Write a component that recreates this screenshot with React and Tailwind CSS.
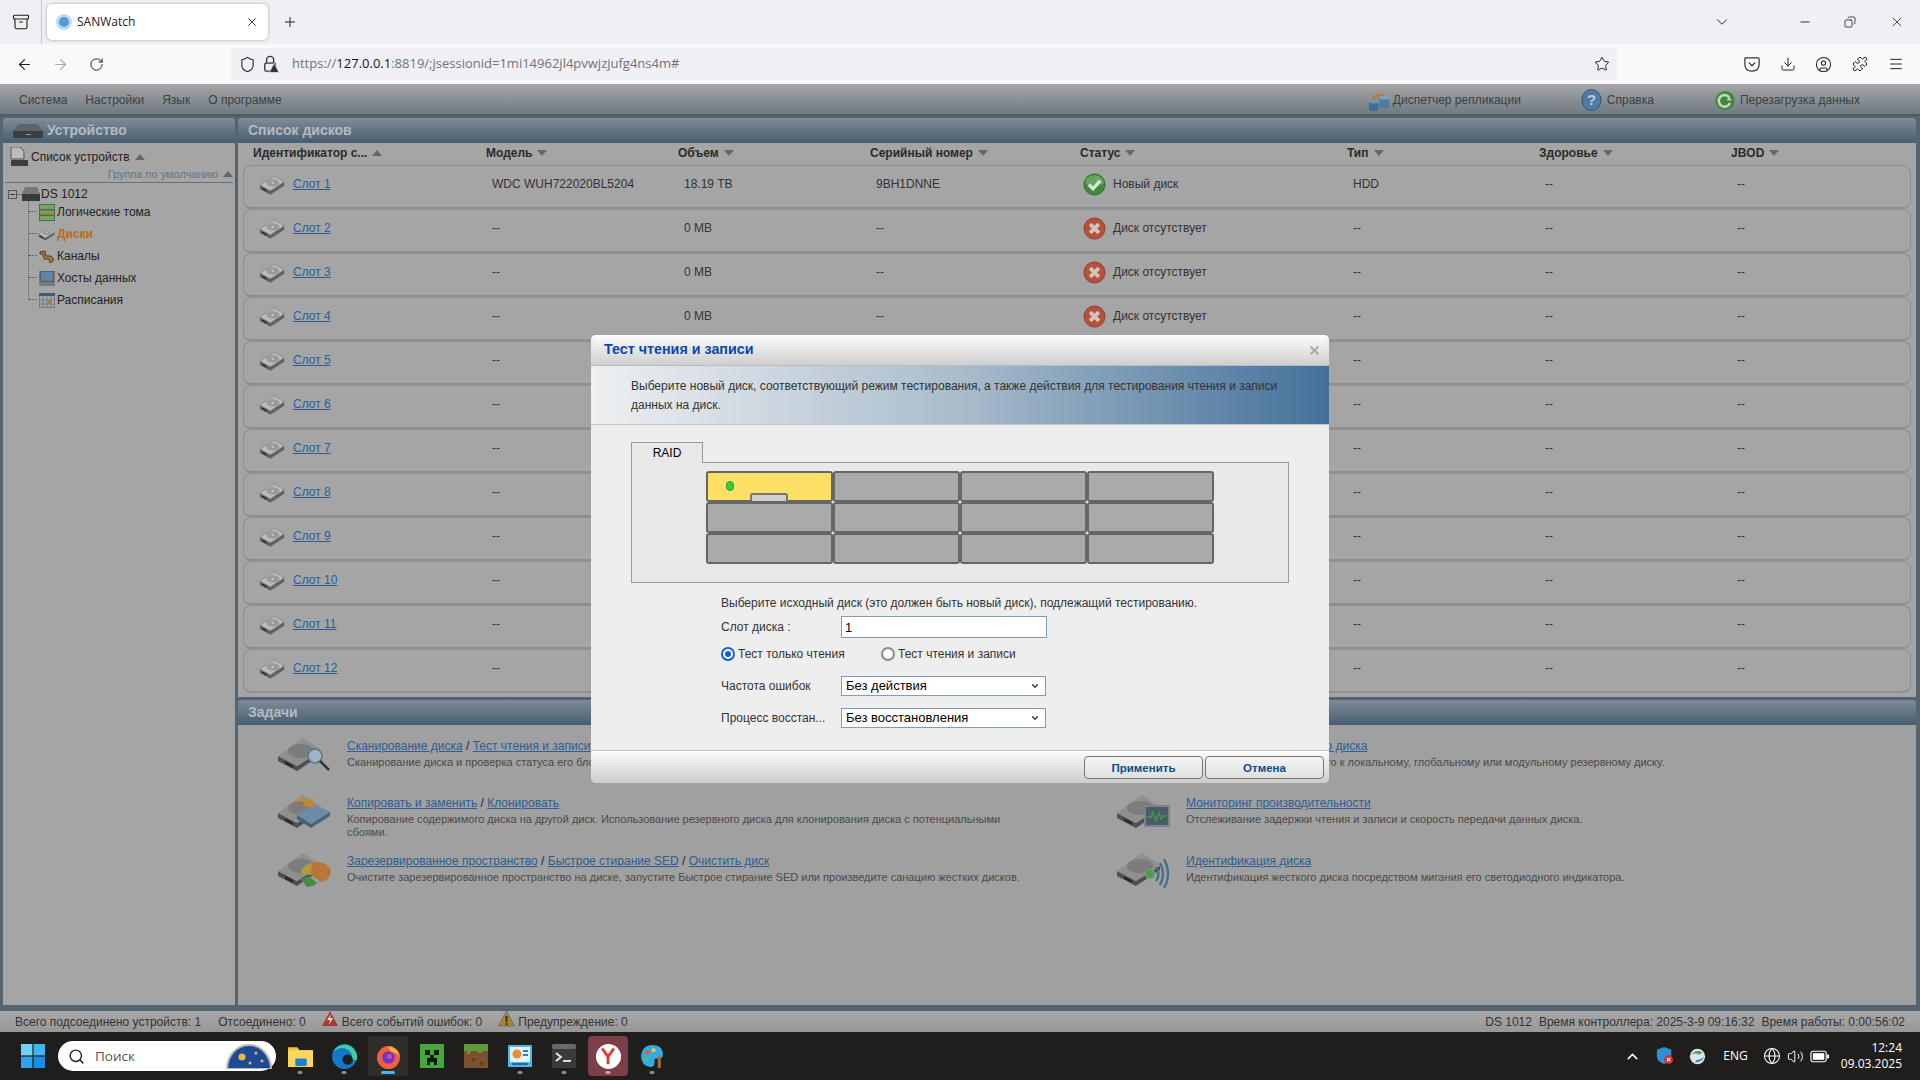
import React from "react";
import {
  Archive,
  ArrowLeft,
  ArrowRight,
  ChevronDown,
  ChevronUp,
  CircleUser,
  Copy,
  Download,
  Globe,
  Menu,
  Minus,
  Plus,
  Puzzle,
  RotateCw,
  Search,
  Shield,
  Star,
  Volume2,
  X,
} from "lucide-react";

const slots = [1, 2, 3, 4, 5, 6, 7, 8, 9, 10, 11, 12];
const columns = [
  { name: "Идентификатор с...", up: true },
  { name: "Модель" },
  { name: "Объем" },
  { name: "Серийный номер" },
  { name: "Статус" },
  { name: "Тип" },
  { name: "Здоровье" },
  { name: "JBOD" },
];
const rowGrid = "grid grid-cols-[248px_192px_192px_208px_269px_192px_192px_1fr]";

const Caret = ({ up }) => (
  <span
    className={`inline-block w-0 h-0 ml-[5px] border-x-[5px] border-x-transparent ${
      up ? "border-b-[6px] border-b-[#666]" : "border-t-[6px] border-t-[#666]"
    }`}
  />
);

const Hdd = ({ className }) => (
  <svg viewBox="0 0 32 24" className={className}>
    <polygon points="1,12 14,19 31,8 31,13 14,24 1,17" fill="#626262" />
    <polygon points="1,12 19,1 31,8 14,19" fill="#bcbcbc" stroke="#7d7d7d" strokeWidth="0.8" />
    <ellipse cx="17" cy="9.5" rx="8" ry="4.5" fill="#9a9a9a" />
    <circle cx="17" cy="9.5" r="1.4" fill="#c8c8c8" />
    <polygon points="4,15 9,18 9,20 4,17" fill="#222" />
  </svg>
);

const TaskDisk = ({ children }) => (
  <svg viewBox="0 0 54 40" className="w-[54px] h-[40px] shrink-0 -mt-[4px]">
    <polygon points="1,22 20,32 44,17 44,21 20,37 1,27" fill="#4f4f4f" />
    <polygon points="1,22 26,4 44,16 20,32" fill="#8f8f8f" />
    <ellipse cx="24" cy="17" rx="13" ry="7" fill="#7c7c7c" />
    <polygon points="8,27 16,31 16,34 8,30" fill="#2a2a2a" />
    {children}
  </svg>
);

const taskIcons = {
  scan: (
    <>
      <circle cx="38" cy="22" r="7" fill="#9db4c8" stroke="#5d7387" strokeWidth="1.5" />
      <line x1="43" y1="27" x2="52" y2="36" stroke="#333" strokeWidth="2.5" />
    </>
  ),
  copy: (
    <>
      <polygon points="20,24 38,13 53,21 34,33" fill="#6d8ba5" />
      <polygon points="20,24 34,33 53,21 53,25 34,37 20,28" fill="#4a6276" />
      <path d="M14 13 Q24 3 33 10 L36 6 L36 17 L25 15 L29 12 Q22 8 14 13 Z" fill="#bd8a35" />
    </>
  ),
  pie: (
    <>
      <path d="M34 26 L35 14 A13 10 0 0 1 53 26 A13 10 0 0 1 44 33 Z" fill="#b9763a" />
      <path d="M34 26 L35 14 A13 10 0 0 0 24 24 Z" fill="#b39a34" />
      <path d="M32 27 L40 34 A13 8 0 0 1 30 38 L24 30 Z" fill="#478c45" />
    </>
  ),
  monitor: (
    <>
      <rect x="29" y="15" width="24" height="20" fill="#4b5b68" stroke="#76858f" strokeWidth="2" />
      <path d="M31 26 l4 0 l2 -5 l3 9 l3 -8 l2 6 l2 -3 l4 0" fill="none" stroke="#3f9a45" strokeWidth="1.5" />
    </>
  ),
  wave: (
    <>
      <circle cx="34" cy="25" r="4.5" fill="#4a9a50" stroke="#72a06f" strokeWidth="1.5" />
      <path d="M40 18 Q45 25 40 32 M44 14 Q50 25 44 36 M48 10 Q56 25 48 39" fill="none" stroke="#4d6c87" strokeWidth="2.4" />
    </>
  ),
  plain: null,
};

const Lnk = ({ children }) => <span className="text-[#2c5d94] underline">{children}</span>;

const Task = ({ icon, links, desc, className }) => (
  <div className={`flex gap-[16px] ${className}`}>
    <TaskDisk>{taskIcons[icon]}</TaskDisk>
    <div>
      <div className="text-[12px] leading-[16px] text-[#222] whitespace-nowrap">
        {links.map((l, i) => (
          <React.Fragment key={l}>
            {i > 0 && " / "}
            <Lnk>{l}</Lnk>
          </React.Fragment>
        ))}
      </div>
      <div className="text-[11px] leading-[13px] mt-[2px] text-[#4a4a4a] w-[690px]">{desc}</div>
    </div>
  </div>
);

const PanelHead = ({ children, icon }) => (
  <div className="h-[25px] shrink-0 rounded-t-[3px] bg-linear-to-b from-[#808c98] to-[#475d72] flex items-center pl-[10px] gap-[4px]">
    {icon}
    <span className="font-bold text-[14px] text-[#b4babf]">{children}</span>
  </div>
);

const TreeItem = ({ icon, label, active }) => (
  <div className="h-[22px] flex items-center gap-[2px] relative">
    <span className="absolute left-[-9px] w-[8px] top-[10px] border-t border-dotted border-[#555]" />
    <span className="w-[17px] h-[17px] flex items-center justify-center">{icon}</span>
    <span className={active ? "font-bold text-[#b96a20]" : "text-[#222]"}>{label}</span>
  </div>
);

const StatusOk = () => (
  <svg viewBox="0 0 24 24" className="w-[23px] h-[23px]">
    <circle cx="12" cy="12" r="11" fill="#3f8a3a" stroke="#2f6a2c" strokeWidth="1" />
    <path d="M2 11 A10 9 0 0 1 22 11 Q12 15 2 11 Z" fill="#65a55d" />
    <path d="M6 12 l4.5 4.5 L18 8" fill="none" stroke="#d5e3cf" strokeWidth="3.6" />
  </svg>
);
const StatusBad = () => (
  <svg viewBox="0 0 24 24" className="w-[23px] h-[23px]">
    <circle cx="12" cy="12" r="11" fill="#b8513c" stroke="#8a4030" strokeWidth="1" />
    <path d="M7.5 7.5 L16.5 16.5 M16.5 7.5 L7.5 16.5" stroke="#cfc6bf" strokeWidth="4" />
  </svg>
);

const DiskRow = ({ n }) => {
  const first = n === 1;
  return (
    <div
      className={`${rowGrid} h-[44px] pt-[11px] rounded-[8px] border border-[#8f8f8f] border-b-2 text-[12px] leading-[14px] text-[#333]`}
    >
      <div className="flex items-start pl-[15px] gap-[8px]">
        <Hdd className="w-[26px] h-[20px] -mt-[2px]" />
        <span className="text-[#2c5d94] underline">Слот {n}</span>
      </div>
      <div>{first ? "WDC WUH722020BL5204" : "--"}</div>
      <div>{first ? "18.19 TB" : "0 MB"}</div>
      <div>{first ? "9BH1DNNE" : "--"}</div>
      <div className="flex items-start gap-[7px] -mt-[4px] -ml-[1px]">
        {first ? <StatusOk /> : <StatusBad />}
        <span className="text-[12px] leading-[14px] pt-[4px]">{first ? "Новый диск" : "Диск отсутствует"}</span>
      </div>
      <div>{first ? "HDD" : "--"}</div>
      <div>--</div>
      <div>--</div>
    </div>
  );
};

const Bay = ({ active }) => (
  <div
    className={`relative h-[31px] rounded-[3px] border-2 border-[#666] ${active ? "bg-[#ffe066]" : "bg-[#aaaaaa]"}`}
  >
    {active && (
      <>
        <span className="absolute left-[18px] top-[8px] w-[8px] h-[10px] rounded-full bg-[#2fd22f] border border-[#3a9a3a]" />
        <span className="absolute left-[42px] bottom-[-1px] w-[38px] h-[8px] rounded-t-[3px] bg-[#cfcfcf] border-2 border-b-0 border-[#777]" />
      </>
    )}
  </div>
);

const SelectBox = ({ value }) => (
  <div className="w-[205px] h-[20px] bg-white border border-[#7f9db9] flex items-center justify-between pl-[4px] pr-[5px] text-[13px] text-black">
    {value}
    <ChevronDown size={10} strokeWidth={3} className="text-[#333]" />
  </div>
);

const Radio = ({ on }) => (
  <span
    className={`w-[14px] h-[14px] rounded-full flex items-center justify-center bg-white ${
      on ? "border-[2px] border-[#0b62d6]" : "border-[2px] border-[#8a8a92]"
    }`}
  >
    {on && <span className="w-[6px] h-[6px] rounded-full bg-[#0b62d6]" />}
  </span>
);

const FooterBtn = ({ children }) => (
  <div className="w-[119px] h-[23px] pt-[2px] rounded-[4px] border border-[#777] bg-linear-to-b from-[#f4f4f4] to-[#e0e0e0] flex items-center justify-center font-bold text-[11.5px] text-[#0a4d8c]">
    {children}
  </div>
);

const Modal = () => (
  <div className="absolute left-[591px] top-[335px] w-[738px] h-[448px] rounded-[5px] overflow-hidden bg-[#eeeeee] flex flex-col text-[12px] text-[#333]">
    <div className="h-[31px] shrink-0 bg-linear-to-b from-[#fdfdfd] to-[#cfcfcf] border-b border-[#bbb] flex items-center justify-between pl-[13px] pr-[8px]">
      <span className="font-bold text-[14.3px] text-[#0b45b5]">Тест чтения и записи</span>
      <X size={13} strokeWidth={4} className="text-[#a9a9a9]" />
    </div>
    <div className="h-[59px] shrink-0 border-b border-[#c8c8c8] bg-linear-to-r from-[#eef0f2] via-[#a9bccc] via-50% to-[#44719a] pl-[40px] pr-[40px] pt-[11px] leading-[19px]">
      Выберите новый диск, соответствующий режим тестирования, а также действия для тестирования чтения и записи данных на диск.
    </div>
    <div className="flex-1 pl-[40px] pr-[40px] pt-[17px]">
      <div className="w-[72px] h-[21px] relative z-10 border border-b-0 border-[#999] bg-[#e8e8e8] flex items-center justify-center text-black -mb-px">
        RAID
      </div>
      <div className="w-[658px] h-[121px] border border-[#999] bg-[#e8e8e8] pl-[74px] pt-[8px]">
        <div className="grid grid-cols-4 w-[508px]">
          {Array.from({ length: 12 }).map((_, i) => (
            <Bay key={i} active={i === 0} />
          ))}
        </div>
      </div>
      <div className="pl-[90px] pt-[13px]">
        <div className="leading-[14px]">Выберите исходный диск (это должен быть новый диск), подлежащий тестированию.</div>
        <div className="flex items-center h-[22px] mt-[6px]">
          <span className="w-[120px]">Слот диска :</span>
          <div className="w-[206px] h-[22px] bg-white border border-[#7f9db9] pl-[3px] text-[13px] leading-[22px] text-black">1</div>
        </div>
        <div className="flex items-center h-[14px] mt-[9px]">
          <span className="flex items-center gap-[3px] w-[160px]">
            <Radio on />
            Тест только чтения
          </span>
          <span className="flex items-center gap-[3px]">
            <Radio />
            Тест чтения и записи
          </span>
        </div>
        <div className="flex items-center h-[20px] mt-[15px]">
          <span className="w-[120px]">Частота ошибок</span>
          <SelectBox value="Без действия" />
        </div>
        <div className="flex items-center h-[20px] mt-[12px]">
          <span className="w-[120px]">Процесс восстан...</span>
          <SelectBox value="Без восстановления" />
        </div>
      </div>
    </div>
    <div className="h-[33px] shrink-0 border-t border-[#c4c4c4] bg-linear-to-b from-[#fdfdfd] to-[#cccccc] flex justify-end items-start gap-[2px] pt-[5px] pr-[5px]">
      <FooterBtn>Применить</FooterBtn>
      <FooterBtn>Отмена</FooterBtn>
    </div>
  </div>
);

const LockWarn = () => (
  <svg viewBox="0 0 18 20" className="w-[16px] h-[18px] ml-[7px]">
    <path d="M4 9 V5.5 A4 4 0 0 1 12 5.5 V9" fill="none" stroke="#333" strokeWidth="1.5" />
    <rect x="2" y="9" width="12" height="9" rx="1.5" fill="none" stroke="#333" strokeWidth="1.5" />
    <polygon points="12.5,9 18,19.5 7,19.5" fill="#333" stroke="#f0f0f4" strokeWidth="0.8" />
  </svg>
);

const Pocket = () => (
  <svg viewBox="0 0 18 18" className="w-[16px] h-[16px] ml-[127px]">
    <path d="M2 2 H16 Q17 2 17 3 V9 Q17 17 9 17 Q1 17 1 9 V3 Q1 2 2 2 Z" fill="none" stroke="#333" strokeWidth="1.4" />
    <path d="M5.5 7.5 L9 11 L12.5 7.5" fill="none" stroke="#333" strokeWidth="1.4" />
  </svg>
);

const BrowserChrome = () => (
  <div className="shrink-0 text-[#222]" style={{ fontFamily: '"Open Sans", sans-serif' }}>
    <div className="h-[44px] bg-[#f0f0f4] flex items-center">
      <div className="w-[42px] h-full border-r border-[#c8c8cc] flex items-center justify-center">
        <Archive size={18} strokeWidth={1.5} />
      </div>
      <div className="ml-[5px] w-[221px] h-[36px] rounded-[5px] bg-white shadow-[0_0_3px_rgba(0,0,0,0.35)] flex items-center pl-[9px] pr-[9px]">
        <span className="w-[16px] h-[16px] rounded-full bg-[#4d9ad4] border-[3px] border-[#b9dcf2]" />
        <span className="ml-[5px] text-[12px] flex-1">SANWatch</span>
        <X size={14} strokeWidth={1.5} />
      </div>
      <Plus size={16} strokeWidth={1.5} className="ml-[14px]" />
      <div className="flex-1" />
      <ChevronDown size={18} strokeWidth={1.3} className="mr-[67px]" />
      <Minus size={14} strokeWidth={1.6} className="mr-[32px]" />
      <Copy size={12} strokeWidth={1.6} className="mr-[33px] -scale-x-100" />
      <X size={16} strokeWidth={1.2} className="mr-[15px]" />
    </div>
    <div className="h-[40px] bg-[#f9f9fb] flex items-center">
      <ArrowLeft size={17} strokeWidth={1.6} className="ml-[16px]" />
      <ArrowRight size={17} strokeWidth={1.6} className="ml-[19px] text-[#aaa]" />
      <RotateCw size={15} strokeWidth={1.6} className="ml-[20px]" />
      <div className="ml-[127px] w-[1386px] h-[32px] rounded-[4px] bg-[#f0f0f4] flex items-center pl-[8px] pr-[7px]">
        <Shield size={17} strokeWidth={1.5} />
        <LockWarn />
        <span className="ml-[13px] text-[13px] flex-1 text-[#70707a]">
          https://<span className="text-[#15141a]">127.0.0.1</span>:8819/;jsessionid=1mi14962jl4pvwjzjufg4ns4m#
        </span>
        <Star size={16} strokeWidth={1.5} />
      </div>
      <Pocket />
      <Download size={16} strokeWidth={1.5} className="ml-[20px]" />
      <CircleUser size={17} strokeWidth={1.5} className="ml-[19px]" />
      <Puzzle size={16} strokeWidth={1.5} className="ml-[20px]" />
      <Menu size={16} strokeWidth={1.5} className="ml-[20px]" />
    </div>
  </div>
);

const Replication = () => (
  <svg viewBox="0 0 24 24" className="w-[23px] h-[23px]">
    <path d="M4 12 Q8 3 14 6 L16 3 L18 10 L10 9 L12 8 Q8 7 7 12 Z" fill="#b37a33" />
    <rect x="2" y="13" width="10" height="10" rx="2" fill="#3f6f96" />
    <ellipse cx="7" cy="13" rx="5" ry="2" fill="#6c97b8" />
    <rect x="13" y="9" width="10" height="11" rx="2" fill="#4a7ba3" />
    <ellipse cx="18" cy="9" rx="5" ry="2" fill="#7ba3c0" />
  </svg>
);
const HelpIcon = () => (
  <svg viewBox="0 0 24 24" className="w-[21px] h-[24px]">
    <ellipse cx="12" cy="12" rx="11" ry="12" fill="#4f7ba6" stroke="#2f4f70" />
    <text x="12" y="18" textAnchor="middle" fontSize="17" fontWeight="700" fill="#c2ccd4" fontFamily="Liberation Sans, sans-serif">?</text>
  </svg>
);
const ReloadIcon = () => (
  <svg viewBox="0 0 24 24" className="w-[20px] h-[23px]">
    <circle cx="12" cy="12" r="11.5" fill="#3e8a3c" />
    <path d="M17 8 A7 7 0 1 0 18 15" fill="none" stroke="#c9d5c6" strokeWidth="3" />
    <path d="M14 12 L20 12 L17 7 Z" fill="#c9d5c6" />
  </svg>
);

const MenuBar = () => (
  <div className="h-[32px] shrink-0 pt-[2px] bg-linear-to-b from-[#a6a6a6] to-[#707b83] border-b-[2px] border-[#505c65] flex items-center text-[12px] text-[#3a3f43]">
    <span className="ml-[19px]">Система</span>
    <span className="ml-[18px]">Настройки</span>
    <span className="ml-[18px]">Язык</span>
    <span className="ml-[18px]">О программе</span>
    <div className="flex-1" />
    <span className="flex items-center gap-[3px]">
      <Replication />
      Диспетчер репликации
    </span>
    <span className="flex items-center gap-[5px] ml-[60px]">
      <HelpIcon />
      Справка
    </span>
    <span className="flex items-center gap-[5px] ml-[61px] mr-[60px]">
      <ReloadIcon />
      Перезагрузка данных
    </span>
  </div>
);

const DeviceTree = () => (
  <div className="flex-1 bg-[#a5a5a5] text-[12px] text-[#222]">
    <div className="flex items-center h-[24px] pl-[6px] pt-[4px]">
      <svg viewBox="0 0 20 20" className="w-[20px] h-[20px]">
        <path d="M2 0 H11 L15 4 V12 H2 Z" fill="#bcbcbc" stroke="#555" strokeWidth="1" />
        <rect x="2" y="13" width="17" height="6" fill="#3e3e3e" />
      </svg>
      <span className="ml-[2px]">Список устройств</span>
      <Caret up />
    </div>
    <div className="flex items-center justify-end h-[14px] pr-[2px] text-[11px] text-[#5f7587]">
      Группа по умолчанию
      <Caret up />
    </div>
    <div className="mx-[2px] mt-[1px] border-t border-[#5f7480]" />
    <div className="relative pl-[5px] pt-[2px]">
      <div className="flex items-center h-[18px]">
        <span className="w-[9px] h-[9px] border border-[#555] flex items-center justify-center">
          <span className="w-[5px] border-t border-[#333]" />
        </span>
        <span className="w-[5px] border-t border-dotted border-[#555]" />
        <svg viewBox="0 0 18 14" className="w-[18px] h-[14px]">
          <path d="M3 0 H15 L18 7 H0 Z" fill="#777" />
          <rect y="7" width="18" height="7" fill="#3a3a3a" />
        </svg>
        <span className="ml-[1px]">DS 1012</span>
      </div>
      <div className="absolute left-[25px] top-[14px] h-[103px] border-l border-dotted border-[#555]" />
      <div className="pl-[30px] -mt-[2px]">
        <TreeItem
          label="Логические тома"
          icon={
            <svg viewBox="0 0 16 17" className="w-[16px] h-[17px]">
              <rect width="16" height="17" fill="#4c6f4b" />
              <rect x="1" y="1" width="14" height="4" fill="#78a468" />
              <rect x="1" y="6.5" width="14" height="4" fill="#8a9a52" />
              <rect x="1" y="12" width="14" height="4" fill="#78a468" />
            </svg>
          }
        />
        <TreeItem active label="Диски" icon={<Hdd className="w-[17px] h-[14px]" />} />
        <TreeItem
          label="Каналы"
          icon={
            <svg viewBox="0 0 16 16" className="w-[16px] h-[16px]">
              <path d="M1 4 L6 3 L7 8 L12 8 L15 12 L11 15 L10 11 L5 11 L4 6 L1 6 Z" fill="#a87a3a" stroke="#4f3b1e" strokeWidth="1" />
            </svg>
          }
        />
        <TreeItem
          label="Хосты данных"
          icon={
            <svg viewBox="0 0 16 15" className="w-[16px] h-[15px]">
              <rect x="1" y="0" width="14" height="11" fill="#6b7a88" stroke="#4a4a4a" />
              <rect x="3" y="2" width="10" height="7" fill="#5d86ad" />
              <rect x="0" y="12" width="16" height="3" fill="#7a7a7a" />
            </svg>
          }
        />
        <TreeItem
          label="Расписания"
          icon={
            <svg viewBox="0 0 16 15" className="w-[16px] h-[15px]">
              <rect width="16" height="15" fill="#a7a7a0" stroke="#3f5a75" />
              <rect width="16" height="3" fill="#3f5a75" />
              <path d="M0 7 H16 M0 11 H16 M4 3 V15 M8 3 V15 M12 3 V15" stroke="#5f7a92" strokeWidth="0.8" />
              <rect x="8.5" y="7.5" width="3" height="3" fill="#b9702a" />
            </svg>
          }
        />
      </div>
    </div>
  </div>
);

const DiskList = () => (
  <div className="h-[579px] shrink-0 flex flex-col">
    <PanelHead>Список дисков</PanelHead>
    <div className="flex-1 bg-[#a5a5a5] px-[5px] overflow-hidden">
      <div className={`${rowGrid} h-[22px] pb-[2px] items-center font-bold text-[12px] text-[#2a2a2a]`}>
        {columns.map((c, i) => (
          <div
            key={c.name}
            className={`flex items-center ${i === 0 ? "pl-[10px]" : i === 4 ? "-ml-[3px]" : "-ml-[5px]"}`}
          >
            {c.name}
            <Caret up={c.up} />
          </div>
        ))}
      </div>
      {slots.map((n) => (
        <DiskRow key={n} n={n} />
      ))}
    </div>
  </div>
);

const TaskPanel = () => (
  <div className="flex-1 flex flex-col">
    <PanelHead>Задачи</PanelHead>
    <div className="flex-1 bg-[#a0a0a0] grid grid-cols-[839px_1fr] pl-[39px] pt-[13px]">
      <div>
        <Task
          icon="scan"
          links={["Сканирование диска", "Тест чтения и записи"]}
          desc="Сканирование диска и проверка статуса его блоков."
          className="h-[57px]"
        />
        <Task
          icon="copy"
          links={["Копировать и заменить", "Клонировать"]}
          desc="Копирование содержимого диска на другой диск. Использование резервного диска для клонирования диска с потенциальными сбоями."
          className="h-[58px]"
        />
        <Task
          icon="pie"
          links={["Зарезервированное пространство", "Быстрое стирание SED", "Очистить диск"]}
          desc="Очистите зарезервированное пространство на диске, запустите Быстрое стирание SED или произведите санацию жестких дисков."
        />
      </div>
      <div>
        <Task
          icon="plain"
          links={["Конфигурация резервного диска"]}
          desc="Назначение этого резервного к локальному, глобальному или модульному резервному диску."
          className="h-[57px]"
        />
        <Task
          icon="monitor"
          links={["Мониторинг производительности"]}
          desc="Отслеживание задержки чтения и записи и скорость передачи данных диска."
          className="h-[58px]"
        />
        <Task
          icon="wave"
          links={["Идентификация диска"]}
          desc="Идентификация жесткого диска посредством мигания его светодиодного индикатора."
        />
      </div>
    </div>
  </div>
);

const StatusBar = () => (
  <div className="h-[21px] shrink-0 bg-linear-to-b from-[#a8a8a8] to-[#979797] flex items-center text-[12px] text-[#333] pl-[15px] pr-[15px] whitespace-nowrap">
    <span>Всего подсоединено устройств: 1</span>
    <span className="ml-[17px]">Отсоединено: 0</span>
    <svg viewBox="0 0 16 16" className="w-[16px] h-[16px] ml-[16px] -mt-[5px]">
      <polygon points="8,0 16,15 0,15" fill="#a93a32" />
      <path d="M9 3 L5 9 H8 L7 14 L11 7 H8 Z" fill="#ddd" />
    </svg>
    <span className="ml-[4px]">Всего событий ошибок: 0</span>
    <svg viewBox="0 0 16 16" className="w-[17px] h-[16px] ml-[16px] -mt-[5px]">
      <polygon points="8,0 16,15 0,15" fill="#a8882e" stroke="#555" strokeWidth="0.6" />
      <rect x="7" y="5" width="2" height="6" fill="#333" />
      <rect x="7" y="12" width="2" height="2" fill="#333" />
    </svg>
    <span className="ml-[3px]">Предупреждение: 0</span>
    <div className="flex-1" />
    <span>DS 1012</span>
    <span className="ml-[7px]">Время контроллера: 2025-3-9 09:16:32</span>
    <span className="ml-[7px]">Время работы: 0:00:56:02</span>
  </div>
);

const AppDot = ({ color = "bg-[#8a8a8a]", wide }) => (
  <span className={`absolute bottom-[2px] left-1/2 -translate-x-1/2 h-[3px] rounded-full ${wide ? "w-[14px]" : "w-[5px]"} ${color}`} />
);

const TaskbarApp = ({ children, dot, box }) => (
  <div className={`relative w-[40px] h-[40px] mx-[2px] flex items-center justify-center rounded-[4px] ${box || ""}`}>
    {children}
    {dot}
  </div>
);

const Taskbar = () => (
  <div className="h-[48px] shrink-0 bg-[#201e1d] flex items-center relative" style={{ fontFamily: '"Open Sans", sans-serif' }}>
    <svg viewBox="0 0 24 24" className="w-[24px] h-[24px] ml-[21px]">
      <rect width="11.4" height="11.4" fill="#6fd3f7" />
      <rect x="12.6" width="11.4" height="11.4" fill="#3fb6f0" />
      <rect y="12.6" width="11.4" height="11.4" fill="#2aa5ea" />
      <rect x="12.6" y="12.6" width="11.4" height="11.4" fill="#1a8fe0" />
    </svg>
    <div className="ml-[13px] w-[218px] h-[30px] rounded-full bg-white flex items-center pl-[10px] pr-[4px] text-[13.5px] text-[#555]">
      <Search size={17} strokeWidth={2} className="text-[#222]" />
      <span className="ml-[10px] flex-1">Поиск</span>
      <svg viewBox="0 0 46 26" className="w-[46px] h-[26px]">
        <path d="M1 26 A22 24 0 0 1 45 26 Z" fill="#1d4a94" stroke="#b9b9b0" strokeWidth="2" />
        <circle cx="16" cy="14" r="3.5" fill="#e8b93c" />
        <circle cx="30" cy="10" r="1.5" fill="#e8b93c" />
        <circle cx="36" cy="18" r="1.5" fill="#e8b93c" />
        <circle cx="24" cy="20" r="1.5" fill="#e8b93c" />
      </svg>
    </div>
    <div className="ml-[2px] flex items-center">
      <TaskbarApp dot={<AppDot />}>
        <svg viewBox="0 0 24 24" className="w-[25px] h-[25px]">
          <path d="M0 3 H9 L11 6 H24 V22 H0 Z" fill="#f4c534" />
          <rect y="6" width="24" height="16" fill="#fbd75b" />
          <rect x="7" y="14" width="11" height="7" rx="1" fill="#1b82d1" />
        </svg>
      </TaskbarApp>
      <TaskbarApp dot={<AppDot />}>
        <svg viewBox="0 0 24 24" className="w-[25px] h-[25px]">
          <circle cx="12" cy="12" r="12" fill="#1278c9" />
          <path d="M24 12 A12 12 0 0 0 1 8 Q8 1 16 6 Q21 10 18 15 H24 Z" fill="#3ecf9e" />
          <circle cx="15" cy="15" r="5" fill="#201e1d" />
        </svg>
      </TaskbarApp>
      <TaskbarApp box="bg-[#2f2d2c]" dot={<AppDot color="bg-[#47b7f5]" wide />}>
        <svg viewBox="0 0 24 24" className="w-[25px] h-[25px]">
          <circle cx="12" cy="13" r="11" fill="#f0613a" />
          <path d="M12 2 Q22 4 23 13 Q20 7 14 8 Z" fill="#fbb03b" />
          <circle cx="12" cy="13" r="6" fill="#6a35c9" />
          <circle cx="13" cy="12" r="2.5" fill="#e13fa3" />
        </svg>
      </TaskbarApp>
      <TaskbarApp>
        <svg viewBox="0 0 24 24" className="w-[24px] h-[24px]">
          <rect width="24" height="24" fill="#46a83a" />
          <rect x="5" y="6" width="5" height="5" fill="#0d1a0b" />
          <rect x="14" y="6" width="5" height="5" fill="#0d1a0b" />
          <rect x="10" y="11" width="4" height="3" fill="#0d1a0b" />
          <rect x="7" y="14" width="10" height="4" fill="#0d1a0b" />
          <rect x="7" y="18" width="3" height="3" fill="#0d1a0b" />
          <rect x="14" y="18" width="3" height="3" fill="#0d1a0b" />
        </svg>
      </TaskbarApp>
      <TaskbarApp>
        <svg viewBox="0 0 24 24" className="w-[24px] h-[24px]">
          <rect width="24" height="24" fill="#7a5230" />
          <rect width="24" height="7" fill="#5f9a35" />
          <rect x="3" y="7" width="3" height="3" fill="#5f9a35" />
          <rect x="14" y="7" width="4" height="2" fill="#5f9a35" />
          <rect x="8" y="14" width="3" height="3" fill="#5d3d22" />
          <rect x="16" y="18" width="3" height="3" fill="#5d3d22" />
        </svg>
      </TaskbarApp>
      <TaskbarApp dot={<AppDot />}>
        <svg viewBox="0 0 24 24" className="w-[24px] h-[24px]">
          <rect width="24" height="22" y="1" fill="#4fb5e8" />
          <rect x="2" y="3" width="20" height="15" fill="#dff2fb" />
          <circle cx="9" cy="10" r="4.5" fill="#e8902c" />
          <rect x="15" y="6" width="5" height="2" fill="#2780c0" />
          <rect x="15" y="10" width="5" height="2" fill="#2780c0" />
          <rect x="4" y="19" width="16" height="2" fill="#1b6fa8" />
        </svg>
      </TaskbarApp>
      <TaskbarApp dot={<AppDot />}>
        <svg viewBox="0 0 24 24" className="w-[24px] h-[24px]">
          <rect width="24" height="24" rx="2" fill="#3a3a3a" />
          <rect width="24" height="5" rx="2" fill="#6a6a6a" />
          <path d="M4 9 L9 13 L4 17" fill="none" stroke="#eee" strokeWidth="1.8" />
          <rect x="11" y="16" width="8" height="1.8" fill="#eee" />
        </svg>
      </TaskbarApp>
      <TaskbarApp box="bg-[#7a3f47]" dot={<AppDot color="bg-[#f0909c]" />}>
        <span className="w-[25px] h-[25px] rounded-full bg-white flex items-center justify-center">
          <svg viewBox="0 0 24 24" className="w-[20px] h-[20px]">
            <path d="M5 3 L12 13 L19 3 M12 13 V22" fill="none" stroke="#e8352e" strokeWidth="3.4" />
          </svg>
        </span>
      </TaskbarApp>
      <TaskbarApp dot={<AppDot />}>
        <svg viewBox="0 0 24 24" className="w-[25px] h-[25px]">
          <path d="M11 1 Q22 1 22 10 Q22 15 16 14 Q13 14 14 18 Q14 22 10 22 Q1 21 1 11 Q2 2 11 1 Z" fill="#35a9e0" />
          <circle cx="7" cy="8" r="2" fill="#f14f3d" />
          <circle cx="13" cy="6" r="2" fill="#f5c542" />
          <circle cx="6" cy="14" r="2" fill="#4fc35c" />
          <rect x="17" y="12" width="3" height="11" fill="#a66b35" />
        </svg>
      </TaskbarApp>
    </div>
    <div className="flex-1" />
    <div className="flex items-center text-white">
      <ChevronUp size={17} strokeWidth={2} />
      <svg viewBox="0 0 20 20" className="w-[18px] h-[18px] ml-[15px]">
        <path d="M9 0 L17 3 V10 Q17 16 9 19 Q1 16 1 10 V3 Z" fill="#2f8fd8" />
        <circle cx="14" cy="14" r="5" fill="#d32f2f" />
        <path d="M12 12 L16 16 M16 12 L12 16" stroke="#fff" strokeWidth="1.3" />
      </svg>
      <svg viewBox="0 0 20 20" className="w-[17px] h-[17px] ml-[15px]">
        <circle cx="10" cy="10" r="9" fill="#d8e3ea" />
        <path d="M2 8 Q8 1 16 5 L12 8 Q7 5 2 8 Z" fill="#5aa352" />
        <path d="M18 10 Q15 17 7 17 L9 14 Q14 14 18 10 Z" fill="#2d86c6" />
      </svg>
      <span className="ml-[17px] text-[12px]">ENG</span>
      <Globe size={18} strokeWidth={1.4} className="ml-[15px]" />
      <Volume2 size={17} strokeWidth={1.4} className="ml-[6px]" />
      <svg viewBox="0 0 20 14" className="w-[19px] h-[14px] ml-[6px]">
        <rect x="1" y="2" width="16" height="11" rx="2" fill="none" stroke="#fff" strokeWidth="1.2" />
        <rect x="3" y="4" width="12" height="7" fill="#fff" />
        <rect x="18" y="5.5" width="2" height="4" fill="#fff" />
      </svg>
      <div className="ml-[12px] mr-[18px] text-right text-[12px] leading-[16px]">
        <div>12:24</div>
        <div>09.03.2025</div>
      </div>
    </div>
  </div>
);

const App = () => (
  <div className="relative w-[1920px] h-[1080px] overflow-hidden flex flex-col bg-[#55646f]" style={{ fontFamily: '"Liberation Sans", Arial, sans-serif' }}>
    <BrowserChrome />
    <MenuBar />
    <div className="flex-1 flex min-h-0 pl-[3px] pr-[4px] pb-[6px] pt-[2px] gap-[3px]">
      <div className="w-[232px] flex flex-col shrink-0">
        <PanelHead
          icon={
            <svg viewBox="0 0 30 14" className="w-[30px] h-[14px]">
              <path d="M6 0 H24 L30 7 H0 Z" fill="#5e6468" />
              <rect y="7" width="30" height="7" fill="#3b3f42" />
              <rect x="13" y="10" width="5" height="1" fill="#999" />
            </svg>
          }
        >
          Устройство
        </PanelHead>
        <DeviceTree />
      </div>
      <div className="flex-1 flex flex-col gap-[3px] min-w-0">
        <DiskList />
        <TaskPanel />
      </div>
    </div>
    <StatusBar />
    <Taskbar />
    <Modal />
  </div>
);

export default App;
